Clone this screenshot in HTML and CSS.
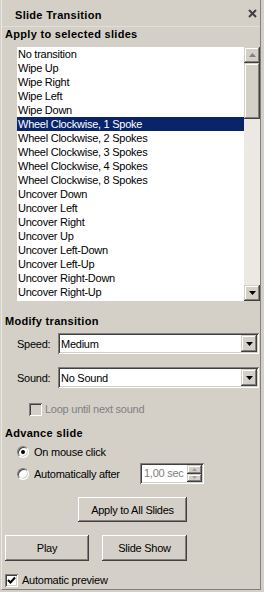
FILE: index.html
```html
<!DOCTYPE html>
<html>
<head>
<meta charset="utf-8">
<link rel="stylesheet" href="styles.css">
</head>
<body>
<div class="panel">
  <div class="header">
    <span class="title">Slide Transition</span>
    <svg class="close" width="9" height="9" viewBox="0 0 9 9"><path d="M1 1L8 8M8 1L1 8" stroke="#404040" stroke-width="2"/></svg>
  </div>
  <div class="heading">Apply to selected slides</div>
  <div class="listbox">
    <ul class="list">
      <li>No transition</li>
      <li>Wipe Up</li>
      <li>Wipe Right</li>
      <li>Wipe Left</li>
      <li>Wipe Down</li>
      <li class="sel">Wheel Clockwise, 1 Spoke</li>
      <li>Wheel Clockwise, 2 Spokes</li>
      <li>Wheel Clockwise, 3 Spokes</li>
      <li>Wheel Clockwise, 4 Spokes</li>
      <li>Wheel Clockwise, 8 Spokes</li>
      <li>Uncover Down</li>
      <li>Uncover Left</li>
      <li>Uncover Right</li>
      <li>Uncover Up</li>
      <li>Uncover Left-Down</li>
      <li>Uncover Left-Up</li>
      <li>Uncover Right-Down</li>
      <li>Uncover Right-Up</li>
      <li>Cover Down</li>
    </ul>
    <div class="vscroll">
      <div class="sbtn"><svg width="7" height="4" viewBox="0 0 7 4"><path d="M3.5 0L7 4H0Z" fill="#808080"/></svg></div>
      <div class="thumb"></div>
      <div class="track"></div>
      <div class="sbtn"><svg width="7" height="4" viewBox="0 0 7 4"><path d="M0 0H7L3.5 4Z" fill="#000"/></svg></div>
    </div>
  </div>

  <div class="heading h-modify">Modify transition</div>
  <div class="field">
    <span class="flabel">Speed:</span>
    <div class="combo"><span class="ctext">Medium</span><div class="cbtn"><svg width="7" height="4" viewBox="0 0 7 4"><path d="M0 0H7L3.5 4Z" fill="#000"/></svg></div></div>
  </div>
  <div class="field field2">
    <span class="flabel">Sound:</span>
    <div class="combo"><span class="ctext">No Sound</span><div class="cbtn"><svg width="7" height="4" viewBox="0 0 7 4"><path d="M0 0H7L3.5 4Z" fill="#000"/></svg></div></div>
  </div>
  <div class="check-row loop">
    <span class="cbox disabled"></span>
    <span class="dis-text">Loop until next sound</span>
  </div>

  <div class="heading h-advance">Advance slide</div>
  <div class="radio-row r1">
    <span class="radio on"></span>
    <span>On mouse click</span>
  </div>
  <div class="radio-row r2">
    <span class="radio"></span>
    <span class="rlabel">Automatically after</span>
    <div class="spin">
      <span class="stext">1,00 sec</span>
      <div class="sbtns">
        <div class="spbtn"><svg width="5" height="3" viewBox="0 0 5 3"><path d="M2.5 0L5 3H0Z" fill="#a0a0a0"/></svg></div>
        <div class="spbtn"><svg width="5" height="3" viewBox="0 0 5 3"><path d="M0 0H5L2.5 3Z" fill="#a0a0a0"/></svg></div>
      </div>
    </div>
  </div>

  <div class="btn apply">Apply to All Slides</div>
  <div class="btn-row">
    <div class="btn play">Play</div>
    <div class="btn show">Slide Show</div>
  </div>
  <div class="check-row preview">
    <span class="cbox checked"><svg width="9" height="9" viewBox="0 0 9 9"><path d="M1 4L3.5 6.5L8 1.5" stroke="#000" stroke-width="2" fill="none"/></svg></span>
    <span>Automatic preview</span>
  </div>
</div>
</body>
</html>
```
FILE: styles.css
```css
* { box-sizing: border-box; }
html, body { margin: 0; padding: 0; background: #d4d0c8; }
body {
  font-family: "Liberation Sans", Arial, sans-serif;
  font-size: 11px;
  letter-spacing: -0.25px;
  color: #000;
  width: 264px;
  height: 592px;
  overflow: hidden;
}
.panel {
  margin-left: 1px;
  width: 260px;
  height: 590px;
  border-left: 1px solid #ebe9e4;
  border-right: 1px solid #808080;
  border-bottom: 1px solid #808080;
  padding-left: 3px;
  line-height: 14px;
}
.header {
  height: 27px;
  padding-top: 8px;
  display: flex;
  justify-content: space-between;
  align-items: flex-start;
  border-bottom: 1px solid #e2dfd9;
  margin-left: -3px;
  padding-left: 13px;
}
.title { font-weight: bold; letter-spacing: 0.3px; }
.close { margin-top: 1px; margin-right: 3px; }
.heading { font-weight: bold; height: 14px; letter-spacing: 0.3px; }
.listbox {
  display: flex;
  margin-top: 6px;
  margin-left: 12px;
  height: 254px;
}
.list {
  list-style: none;
  margin: 0;
  padding: 0;
  flex: 1;
  background: #fff;
  overflow: hidden;
}
.list li {
  height: 14px;
  padding-left: 1px;
  white-space: nowrap;
}
.list li.sel { background: #0a246a; color: #fff; }
.vscroll {
  width: 16px;
  display: flex;
  flex-direction: column;
  background: #ece9e5;
}
.sbtn, .thumb, .cbtn, .spbtn {
  background: #d4d0c8;
  box-shadow: inset -1px -1px #404040, inset 1px 1px #d4d0c8, inset -2px -2px #808080, inset 2px 2px #fff;
}
.sbtn {
  height: 16px;
  display: flex;
  align-items: center;
  justify-content: center;
}
.thumb { height: 56px; }
.track { flex: 1; }
.h-modify { margin-top: 13px; }
.field {
  display: flex;
  align-items: center;
  height: 21px;
  margin-top: 5px;
  margin-left: 12px;
  margin-right: 1px;
}
.field2 { margin-top: 13px; }
.flabel { width: 41px; }
.combo {
  flex: 1;
  height: 21px;
  background: #fff;
  box-shadow: inset 1px 1px #808080, inset -1px -1px #fff, inset 2px 2px #404040, inset -2px -2px #d4d0c8;
  display: flex;
  align-items: center;
  padding: 2px;
}
.ctext { flex: 1; padding-left: 1px; }
.cbtn {
  width: 16px;
  height: 17px;
  display: flex;
  align-items: center;
  justify-content: center;
}
.check-row {
  display: flex;
  align-items: center;
  height: 14px;
}
.loop { margin-top: 14px; margin-left: 24px; }
.cbox {
  width: 13px;
  height: 13px;
  background: #fff;
  box-shadow: inset 1px 1px #808080, inset -1px -1px #fff, inset 2px 2px #404040, inset -2px -2px #d4d0c8;
  display: flex;
  align-items: center;
  justify-content: center;
  margin-right: 3px;
}
.cbox.disabled { background: #d4d0c8; }
.dis-text { color: #808080; }
.h-advance { margin-top: 10px; }
.radio-row {
  display: flex;
  align-items: center;
  margin-left: 12px;
}
.r1 { height: 14px; margin-top: 5px; }
.r2 { height: 21px; margin-top: 4px; }
.radio {
  width: 12px;
  height: 12px;
  border-radius: 50%;
  background: #fff;
  border: 1px solid;
  border-color: #808080 #fff #fff #808080;
  box-shadow: inset 1px 1px #404040, inset -1px -1px #d4d0c8;
  margin-right: 5px;
  position: relative;
}
.radio.on::after {
  content: "";
  position: absolute;
  left: 3px;
  top: 3px;
  width: 4px;
  height: 4px;
  border-radius: 50%;
  background: #000;
}
.rlabel { width: 106px; }
.spin {
  width: 64px;
  height: 21px;
  background: #fff;
  box-shadow: inset 1px 1px #808080, inset -1px -1px #fff, inset 2px 2px #404040, inset -2px -2px #d4d0c8;
  display: flex;
  padding: 2px;
}
.stext { flex: 1; color: #808080; padding-left: 2px; line-height: 17px; white-space: nowrap; overflow: hidden; }
.sbtns { width: 15px; display: flex; flex-direction: column; }
.spbtn {
  flex: 1;
  display: flex;
  align-items: center;
  justify-content: center;
}
.btn {
  background: #d4d0c8;
  display: flex;
  align-items: center;
  justify-content: center;
  box-shadow: inset -1px -1px #404040, inset 1px 1px #fff, inset -2px -2px #808080, inset 2px 2px #d4d0c8;
}
.apply { margin-top: 13px; margin-left: 73px; width: 109px; height: 25px; }
.btn-row { display: flex; gap: 13px; margin-top: 13px; }
.play { width: 84px; height: 26px; }
.show { width: 85px; height: 26px; }
.preview { margin-top: 12px; }
.preview .cbox { margin-right: 4px; }
```
